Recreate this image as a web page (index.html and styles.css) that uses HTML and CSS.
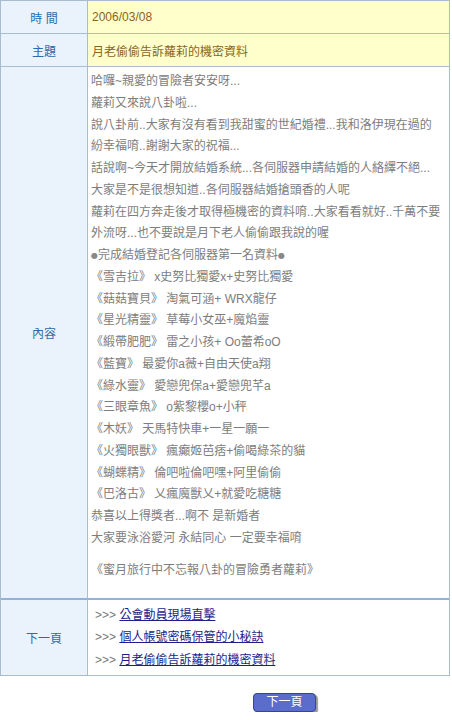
FILE: index.html
```html
<!DOCTYPE html>
<html lang="zh-Hant">
<head>
<meta charset="utf-8">
<title>月老偷偷告訴蘿莉的機密資料</title>
<link rel="stylesheet" href="styles.css">
</head>
<body>
<div class="sheet">
  <div class="label row-short">時 間</div>
  <div class="value row-short">2006/03/08</div>

  <div class="label row-short">主題</div>
  <div class="value row-short">月老偷偷告訴蘿莉的機密資料</div>

  <div class="label row-content">內容</div>
  <div class="content row-content">
    <div class="line">哈囉~親愛的冒險者安安呀...</div>
    <div class="line">蘿莉又來說八卦啦...</div>
    <div class="line">說八卦前..大家有沒有看到我甜蜜的世紀婚禮...我和洛伊現在過的</div>
    <div class="line">紛幸福唷..謝謝大家的祝福...</div>
    <div class="line">話說啊~今天才開放結婚系統...各伺服器申請結婚的人絡繹不絕...</div>
    <div class="line">大家是不是很想知道..各伺服器結婚搶頭香的人呢</div>
    <div class="line">蘿莉在四方奔走後才取得極機密的資料唷..大家看看就好..千萬不要</div>
    <div class="line">外流呀...也不要說是月下老人偷偷跟我說的喔</div>
    <div class="line"><span class="dot">●</span>完成結婚登記各伺服器第一名資料<span class="dot">●</span></div>
    <div class="line">《雪吉拉》 x史努比獨愛x+史努比獨愛</div>
    <div class="line">《菇菇寶貝》 淘氣可涵+ WRX龍仔</div>
    <div class="line">《星光精靈》 草莓小女巫+魔焰靈</div>
    <div class="line">《緞帶肥肥》 雷之小孩+ Oo蕾希oO</div>
    <div class="line">《藍寶》 最愛你a薇+自由天使a翔</div>
    <div class="line">《綠水靈》 愛戀兜保a+愛戀兜芊a</div>
    <div class="line">《三眼章魚》 o紫黎櫻o+小秤</div>
    <div class="line">《木妖》 天馬特快車+一星一願一</div>
    <div class="line">《火獨眼獸》 瘋癲姬芭痞+偷喝綠茶的貓</div>
    <div class="line">《蝴蝶精》 倫吧啦倫吧嘿+阿里偷偷</div>
    <div class="line">《巴洛古》 乂瘋魔獸乂+就愛吃糖糖</div>
    <div class="line">恭喜以上得獎者...啊不 是新婚者</div>
    <div class="line">大家要泳浴愛河 永結同心 一定要幸福唷</div>
    <div class="line sign">《蜜月旅行中不忘報八卦的冒險勇者蘿莉》</div>
  </div>

  <div class="label row-links">下一頁</div>
  <div class="links row-links">
    <div class="link-line"><span class="arrows">&gt;&gt;&gt;</span> <a href="#">公會動員現場直擊</a></div>
    <div class="link-line"><span class="arrows">&gt;&gt;&gt;</span> <a href="#">個人帳號密碼保管的小秘訣</a></div>
    <div class="link-line"><span class="arrows">&gt;&gt;&gt;</span> <a href="#">月老偷偷告訴蘿莉的機密資料</a></div>
  </div>
</div>
<div class="pager">
  <button class="next-btn" type="button">下一頁</button>
</div>
</body>
</html>
```
FILE: styles.css
```css
html, body {
  margin: 0;
  padding: 0;
  background: #ffffff;
}

body {
  font-family: "Liberation Sans", "Noto Sans CJK TC", sans-serif;
  font-size: 12px;
  color: #7d7d7d;
}

.sheet {
  width: 450px;
  box-sizing: border-box;
  border: 1px solid #a8bdd0;
  border-bottom: none;
  display: grid;
  grid-template-columns: 87px 1fr;
}

.label,
.value,
.content,
.links {
  box-sizing: border-box;
  border-bottom: 1px solid #a8bdd0;
}

.label {
  background: #eaf2fb;
  color: #2f6aa6;
  border-right: 1px solid #a8bdd0;
  display: flex;
  align-items: center;
  justify-content: center;
}

.row-short {
  height: 33px;
}

.value {
  background: #ffffcc;
  color: #8c6418;
  display: flex;
  align-items: center;
  padding-left: 4px;
}

.row-content {
  height: 533px;
  border-bottom: 2px solid #8fb3da;
}

.content {
  padding: 4px 0 0 3px;
}

.line {
  line-height: 21.75px;
  white-space: nowrap;
}

.line.sign {
  margin-top: 10px;
}

.dot {
  font-family: "DejaVu Sans", sans-serif;
  font-size: 8px;
  color: #888888;
  vertical-align: 1px;
}

.row-links {
  height: 76px;
}

.links {
  padding-left: 7px;
  display: flex;
  flex-direction: column;
  justify-content: center;
}

.link-line {
  line-height: 22.5px;
  white-space: nowrap;
}

.arrows {
  color: #777777;
}

.links a {
  color: #1d1d8c;
  text-decoration: underline;
}

.pager {
  padding: 17px 0 0 253px;
}

.next-btn {
  width: 63px;
  height: 19px;
  padding: 0;
  margin: 0;
  box-sizing: border-box;
  background: #5b6dcc;
  border: 1px solid #34459a;
  border-radius: 4px;
  box-shadow: 2px 2px 1px #9a9a9a;
  color: #ffffff;
  font-family: "Liberation Sans", "Noto Sans CJK TC", sans-serif;
  font-size: 12px;
  line-height: 17px;
  cursor: pointer;
}
```
